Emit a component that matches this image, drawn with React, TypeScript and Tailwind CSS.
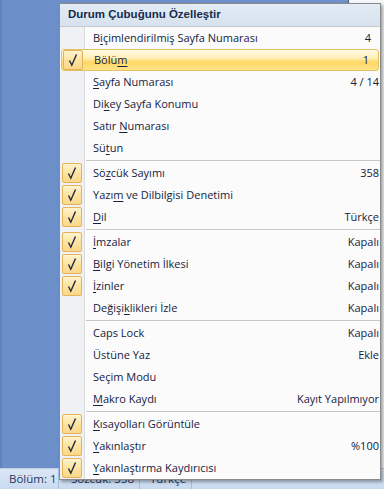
import React from "react";

type Item = { label: string; value?: string; checked?: boolean; hl?: boolean; vpr?: string } | "sep";

const items: Item[] = [
  { label: "B&içimlendirilmiş Sayfa Numarası", value: "4", vpr: "pr-[9px]" },
  { label: "Bölü&m", value: "1", checked: true, hl: true, vpr: "pr-[9px]" },
  { label: "&Sayfa Numarası", value: "4 / 14" },
  { label: "Di&key Sayfa Konumu" },
  { label: "Satır &Numarası" },
  { label: "Sü&tun" },
  "sep",
  { label: "Sö&zcük Sayımı", value: "358", checked: true },
  { label: "Yazı&m ve Dilbilgisi Denetimi", checked: true },
  { label: "&Dil", value: "Türkçe", checked: true },
  "sep",
  { label: "&İmzalar", value: "Kapalı", checked: true },
  { label: "&Bilgi Yönetim İlkesi", value: "Kapalı", checked: true },
  { label: "&İzinler", value: "Kapalı", checked: true },
  { label: "Değişi&klikleri İzle", value: "Kapalı" },
  "sep",
  { label: "Caps Lock", value: "Kapalı" },
  { label: "Üstüne Yaz", value: "Ekle" },
  { label: "Seçim Modu" },
  { label: "&Makro Kaydı", value: "Kayıt Yapılmıyor" },
  "sep",
  { label: "&Kısayolları Görüntüle", checked: true },
  { label: "&Yakınlaştır", value: "%100", checked: true },
  { label: "&Yakınlaştırma Kaydırıcısı", checked: true },
];

function Label({ text }: { text: string }) {
  const i = text.indexOf("&");
  if (i < 0) return <>{text}</>;
  return (
    <>
      {text.slice(0, i)}
      <u className="underline decoration-1 underline-offset-[2px]">{text.charAt(i + 1)}</u>
      {text.slice(i + 2)}
    </>
  );
}

function Check() {
  return (
    <div className="ml-[2px] w-[20px] h-[20px] rounded-[2px] border border-[#e2b35a] bg-[linear-gradient(to_bottom,#fff4cf,#fde3a0_50%,#fbd787)] flex items-center justify-center">
      <svg width="18" height="18" viewBox="0 0 18 18">
        <polyline points="5.5,9.5 7.8,14.2 12.5,3.5" fill="none" stroke="#1b2745" strokeWidth="1.4" />
      </svg>
    </div>
  );
}

export default function App() {
  return (
    <div className="relative w-[384px] h-[489px] overflow-hidden flex flex-col [font-family:'Open_Sans',sans-serif] text-[11px] text-[#16223f]">
      <div className="flex-1 flex">
        <div className="flex-1 bg-[linear-gradient(to_right,#5b7db6_0px,#6c8fc9_3px,#6e91ca)] border-r border-[#4a5a78]" />
        <div className="w-[35px] bg-[#f4f6f9]" />
      </div>
      <div className="h-[21px] flex items-stretch bg-[linear-gradient(to_bottom,#dbe7f6,#c9daf0)] border-t border-[#b9cce6] text-[#20385f] text-[11.5px]">
        <div className="w-[59px] pl-[9px] flex items-center border-r border-[#a9bedb]">Bölüm: 1</div>
        <div className="w-[81px] pl-[12px] flex items-center border-r border-[#a9bedb]">Sözcük: 358</div>
        <div className="w-[52px] pl-[10px] flex items-center border-r border-[#a9bedb]">Türkçe</div>
        <div className="flex-1" />
      </div>

      <div className="absolute left-[59px] top-[3px] w-[322px] border border-[#8a8a8a] bg-[#fbfbfb] shadow-[2px_2px_3px_rgba(0,0,0,0.35)]">
        <div className="h-[23px] pl-[8px] flex items-center border-b border-[#c3cad3] bg-[linear-gradient(to_bottom,#e3ecf5,#d6e2ee)] font-bold text-[11.5px] text-[#172a4c] [font-family:'Liberation_Sans',Arial,sans-serif]">
          Durum Çubuğunu Özelleştir
        </div>
        {items.map((it, idx) => {
          if (it === "sep") {
            return (
              <div key={idx} className="h-[3px] flex">
                <div className="w-[25px] bg-[#eff1f4] border-r border-[#d9dadc]" />
                <div className="w-[1px] bg-white" />
                <div className="flex-1 flex flex-col pt-[1px]">
                  <div className="h-[1px] bg-[#c5c5c5]" />
                  <div className="h-[1px] bg-white" />
                </div>
              </div>
            );
          }
          if (it.hl) {
            return (
              <div key={idx} className="h-[22px] px-[1px] flex">
                <div className="flex-1 flex items-center rounded-[3px] border border-[#e3c165] bg-[linear-gradient(to_bottom,#fffbe6,#ffefb8_40%,#ffd863_60%,#ffe28a)]">
                  <div className="w-[26px] flex items-center">
                    <div className="-ml-[1px]"><Check /></div>
                  </div>
                  <div className="flex-1 pl-[6px] flex items-center justify-between">
                    <span><Label text={it.label} /></span>
                    <span className={it.vpr ?? "pr-[1px]"}>{it.value}</span>
                  </div>
                </div>
              </div>
            );
          }
          return (
            <div key={idx} className="h-[22px] flex">
              <div className="w-[25px] bg-[#eff1f4] border-r border-[#d9dadc] flex items-center">
                {it.checked ? <Check /> : null}
              </div>
              <div className="w-[1px] bg-white" />
              <div className="flex-1 pl-[7px] flex items-center justify-between">
                <span><Label text={it.label} /></span>
                <span className={it.vpr ?? "pr-[1px]"}>{it.value}</span>
              </div>
            </div>
          );
        })}
      </div>
    </div>
  );
}
